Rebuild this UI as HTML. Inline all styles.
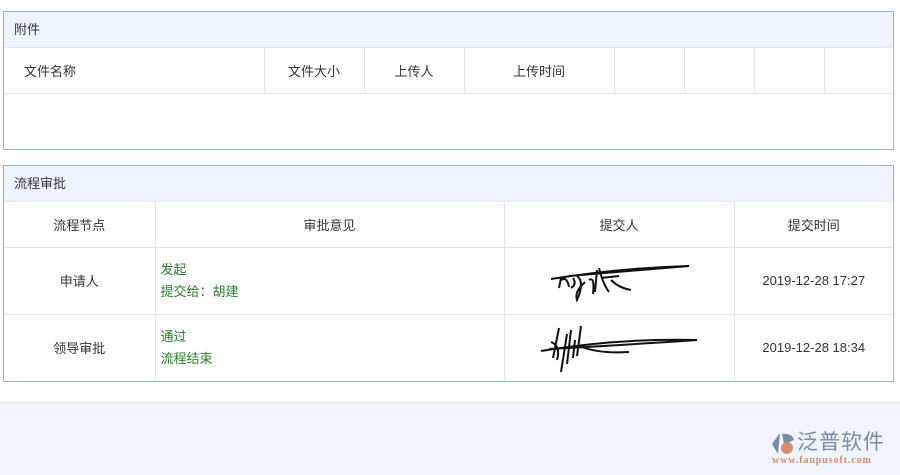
<!DOCTYPE html>
<html><head><meta charset="utf-8"><style>
*{margin:0;padding:0;box-sizing:border-box}
body{width:900px;height:475px;background:#fff;font-family:"Liberation Sans","Noto Sans CJK SC",sans-serif;font-size:13px;color:#333;position:relative;overflow:hidden}
.p{position:absolute;left:3px;width:891px;border:1px solid #8fb8c0;background:#fff}
.h{height:36px;background:#eef4fd;border-bottom:1px solid #e3e8ee;line-height:35px;padding-left:10px}
table{border-collapse:collapse;width:100%;table-layout:fixed}
td{border-right:1px solid #e3e6ea;border-bottom:1px solid #e3e6ea;text-align:center;vertical-align:middle;padding:0}
td:last-child{border-right:none}
tr:last-child td{border-bottom:none}
.g{color:#2a7d2a;text-align:left;padding-left:5px;line-height:22px}
</style></head><body>
<div class="p" style="top:11px;height:139px">
<div class="h">附件</div>
<table><tr style="height:45px"><td style="width:260px;text-align:left;padding-left:20px">文件名称</td><td style="width:100px">文件大小</td><td style="width:100px">上传人</td><td style="width:150px">上传时间</td><td style="width:70px"></td><td style="width:70px"></td><td style="width:70px"></td><td></td></tr></table>
<div style="border-top:1px solid #e3e6ea"></div>
</div>
<div class="p" style="top:165px;height:217px">
<div class="h">流程审批</div>
<table>
<tr style="height:45px"><td style="width:151px">流程节点</td><td style="width:349px">审批意见</td><td style="width:230px">提交人</td><td>提交时间</td></tr>
<tr style="height:67px"><td>申请人</td><td class="g">发起<br>提交给：胡建</td><td><svg width="160" height="50" viewBox="0 0 160 50" fill="none" stroke="#111" stroke-width="2"><path d="M12 25 Q80 14 150 12 Q100 16 30 22"/><path d="M22 24 L20 34 M22 26 Q28 22 30 33 M34 24 Q38 30 32 34 M38 22 Q46 28 38 46 Q35 38 46 28 M50 26 Q56 22 54 40 M58 16 L56 38 M60 14 Q64 30 70 38 M62 24 L80 22 M72 26 Q80 34 92 36"/></svg></td><td>2019-12-28 17:27</td></tr>
<tr style="height:67px"><td>领导审批</td><td class="g">通过<br>流程结束</td><td><svg width="160" height="60" viewBox="0 0 160 60" fill="none" stroke="#111" stroke-width="2"><path d="M2 35 Q80 22 158 24 Q100 28 10 33"/><path d="M20 12 L14 42 M12 26 Q22 30 18 44 M28 18 L22 56 M32 14 L28 48 M36 24 L34 42 M42 10 L38 40 M40 30 Q60 38 90 36"/></svg></td><td>2019-12-28 18:34</td></tr>
</table>
</div>
<div style="position:absolute;left:0;top:402px;width:900px;height:73px;background:#f0f5fc;border-top:1px solid #e3e8ee"></div>
<svg style="position:absolute;left:770px;top:432px" width="26" height="24" viewBox="0 0 26 24"><path d="M10 1 L2 12 L8 22 Z" fill="#7c8aa0"/><path d="M12 2 Q22 1 24 8 L14 12 Z" fill="#7c8aa0"/><circle cx="17" cy="16" r="6" fill="#d98b6c"/></svg>
<div style="position:absolute;left:797px;top:431px;font-size:21px;line-height:24px;color:#7c8aa0;letter-spacing:1px">泛普软件</div>
<div style="position:absolute;left:772px;top:455px;font-size:10px;line-height:12px;color:#d98b6c;font-family:'Liberation Serif',serif;letter-spacing:0.9px;font-weight:bold">www.fanpusoft.com</div>
</body></html>
